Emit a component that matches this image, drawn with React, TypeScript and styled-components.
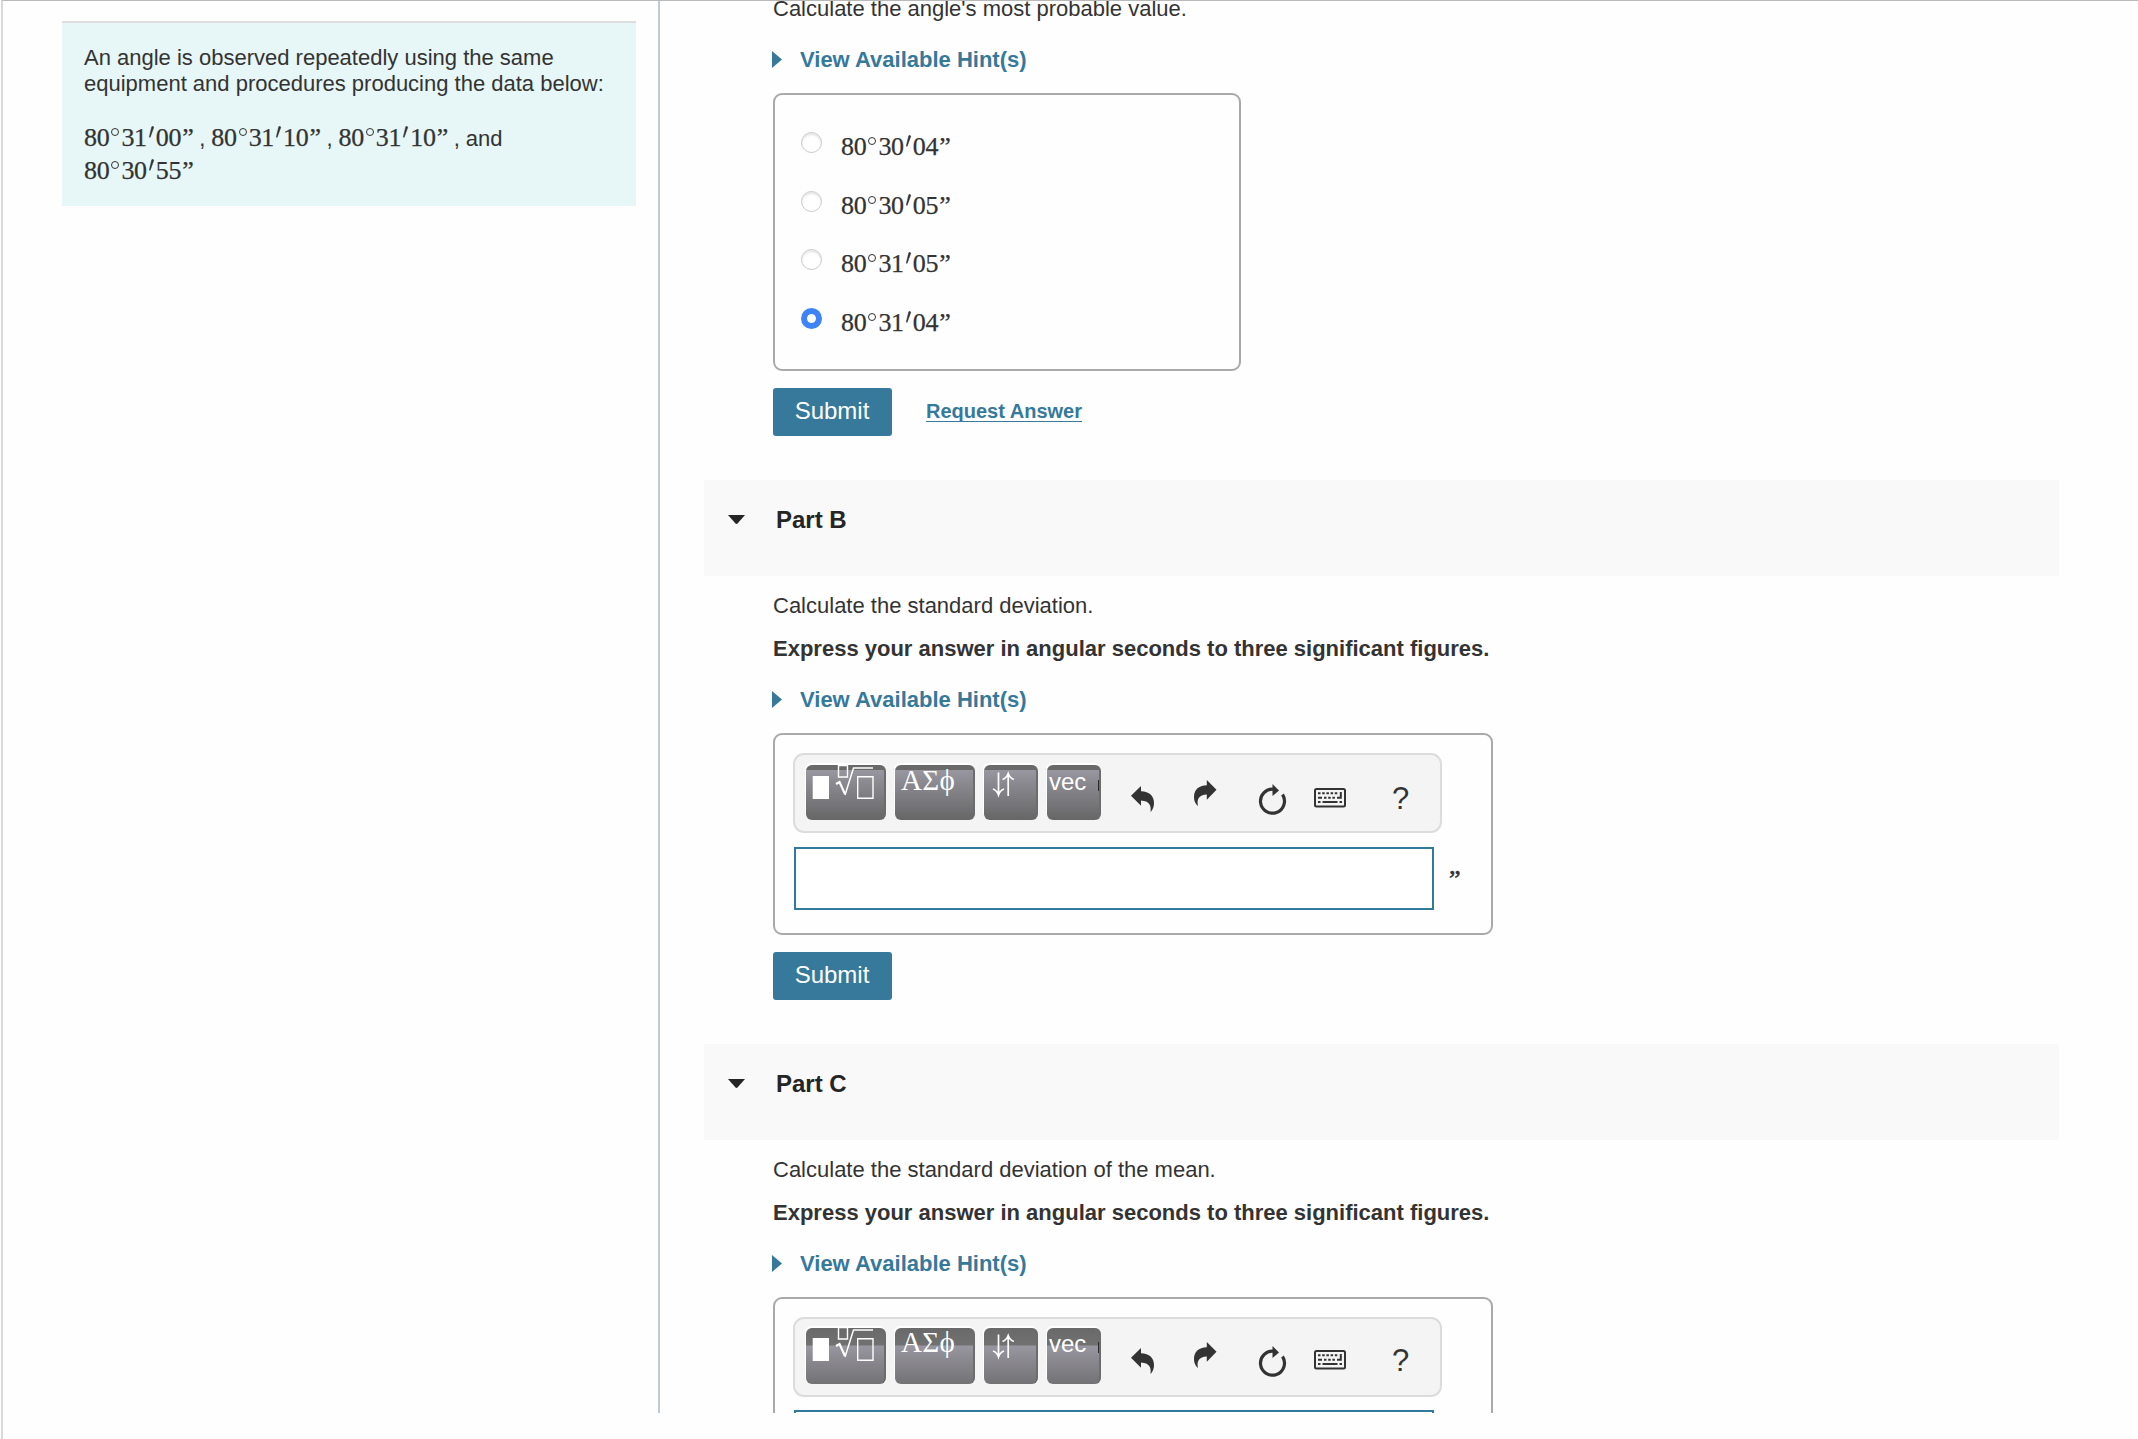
import { FC } from 'react';
import styled, { createGlobalStyle } from 'styled-components';

const GlobalStyle = createGlobalStyle`
  * {
    box-sizing: border-box;
  }
  body {
    margin: 0;
    background: #fefefe;
    color: #333;
    font-family: 'Liberation Sans', Arial, sans-serif;
    font-size: 22px;
    line-height: 26px;
  }
`;

const Frame = styled.div`
  height: 1439px;
  margin-left: 1px;
  border-top: 1px solid #b9b9b9;
  border-left: 2px solid #d9d9d9;
  overflow: hidden;
`;

const Columns = styled.div`
  display: flex;
  height: 1412px;
  overflow: hidden;
`;

const Sidebar = styled.aside`
  width: 657px;
  flex: none;
  padding: 20px 22px 0 59px;
  border-right: 2px solid #c0cad6;
`;

const ProblemBox = styled.div`
  height: 185px;
  padding: 22px 22px 0;
  border-top: 2px solid #dedede;
  background: #e7f6f6;
`;

const ProblemText = styled.p`
  margin: 0;
  white-space: nowrap;
`;

const ProblemData = styled.p`
  margin: 26px 0 0;
  line-height: 32.5px;
  white-space: nowrap;
`;

const Separator = styled.span`
  display: inline-block;
  width: 17px;
  padding-left: 5px;
`;

const Main = styled.main`
  flex: 1;
  margin: -5px 79px 0 44px;
`;

const PartBody = styled.section`
  padding: 0 0 44px 69px;
`;

const PartHeader = styled.header`
  display: flex;
  height: 96px;
  margin-bottom: 17px;
  padding: 26px 0 0 24px;
  background: #f9f9f9;
  color: #252525;
  font-size: 24px;
  font-weight: bold;
  line-height: 27px;
`;

const Collapse = styled.svg`
  width: 17px;
  height: 9px;
  margin: 9px 31px 0 0;
`;

const Question = styled.p`
  margin: 0;
`;

const Instruction = styled.p`
  margin: 17px 0 0;
  font-weight: bold;
`;

const Hint = styled.a`
  display: flex;
  align-items: center;
  margin: 25px 0 20px;
  color: #36799a;
  font-weight: bold;

  svg {
    width: 10px;
    height: 17px;
    margin: -2px 18px 0 -1px;
  }
`;

const Box = styled.div<{ $width: number, $height: number }>`
  width: ${({ $width }) => $width}px;
  height: ${({ $height }) => $height}px;
  border: 2px solid #a9a9a9;
  border-radius: 9px;
`;

const OptionList = styled(Box)`
  padding: 37px 26px 0;
`;

const Option = styled.label`
  display: flex;
  height: 58.7px;
`;

const Radio = styled.span<{ $checked: boolean }>`
  width: 21px;
  height: 21px;
  margin-right: 19px;
  border-radius: 50%;
  border: ${({ $checked }) => ($checked ? '6.5px solid #3f83f8' : '1px solid #c9c9c9')};
  background: #fff;
  box-shadow: ${({ $checked }) => ($checked ? 'none' : 'inset 0 2px 2px #e6e6e6')};
`;

const OptionValue = styled.span`
  padding-top: 2px;
`;

const Actions = styled.div`
  display: flex;
  margin-top: 17px;
`;

const Submit = styled.button`
  width: 119px;
  height: 48px;
  padding: 0 1px 3px 0;
  border: 0;
  border-radius: 3px;
  background: #36799a;
  color: #fff;
  font: 24px 'Liberation Sans', Arial, sans-serif;
`;

const RequestAnswer = styled.a`
  height: 22px;
  margin: 12px 0 0 34px;
  border-bottom: 1px solid #36799a;
  color: #36799a;
  font-size: 20px;
  font-weight: bold;
  line-height: 22px;
`;

const AngleText = styled.span`
  display: inline-flex;
  align-items: baseline;
  font-family: 'Liberation Serif', 'Times New Roman', serif;
  font-size: 26px;
  line-height: 26px;
  letter-spacing: -0.3px;
  -webkit-text-stroke: 0.25px #333;
`;

const Degree = styled.span`
  display: inline-block;
  width: 8px;
  height: 8px;
  margin: 0 2px 0 2px;
  transform: translateY(-10px);
  border: 1px solid #333;
  border-radius: 50%;
`;

const Prime = styled.svg`
  width: 9px;
  height: 13px;
  transform: translateY(-7px);
`;

const Quote = styled.span`
  width: 13px;
  padding-left: 1px;
`;

const AnswerBox = styled(Box)`
  padding: 18px;
`;

const Toolbar = styled.div`
  display: flex;
  align-items: flex-start;
  width: 649px;
  height: 80px;
  padding: 10px 0 0 11px;
  border: 2px solid #dcdcdc;
  border-radius: 11px;
  background: #f4f4f4;
`;

const ToolButton = styled.span<{ $width: number, $shifted: boolean }>`
  flex: none;
  width: ${({ $width }) => $width}px;
  height: ${({ $shifted }) => ($shifted ? 56 : 55)}px;
  margin: ${({ $shifted }) => ($shifted ? '-1px' : '0')} 9px 0 0;
  padding-top: ${({ $shifted }) => ($shifted ? 0 : 1)}px;
  overflow: hidden;
  border-radius: 6px;
  border-right: 2px solid #6c6c6c;
  background: ${({ $shifted }) => ($shifted
    ? 'linear-gradient(#696969, #717171 17px, #98969f 18px, #737275)'
    : 'linear-gradient(#696969 0, #696969 5px, #98969f 5px, #666)')};
  box-shadow: -1px -2px 0 #fff;
  color: #fff;

  svg {
    display: block;
    margin-top: -1px;
  }
`;

const Greek = styled.span`
  display: block;
  padding-left: 6px;
  font-family: 'Liberation Serif', serif;
  font-size: 29px;
  line-height: 28px;
  letter-spacing: 0.3px;
`;

const Vec = styled.span`
  display: block;
  padding-left: 2px;
  font-size: 24px;
  line-height: 32px;
`;

// sliver of the next sprite at the right edge of the vec button
const SpriteEdge = styled.span`
  float: right;
  width: 1px;
  height: 11px;
  margin-top: 14px;
  background: #2b2b2b;
`;

const ToolIcon = styled.svg<{ $top: number, $left: number }>`
  flex: none;
  margin: ${({ $top }) => $top}px 0 0 ${({ $left }) => $left}px;
  color: #333;
`;

const Help = styled.span<{ $top: number }>`
  margin: ${({ $top }) => $top}px 0 0 46px;
  font-size: 31px;
  line-height: 36px;
`;

const InputRow = styled.div<{ $shifted: boolean }>`
  display: flex;
  margin: ${({ $shifted }) => ($shifted ? 13 : 14)}px 0 0 1px;
`;

const AnswerInput = styled.input`
  width: 640px;
  height: 63px;
  border: 2px solid #317a9b;
  background: #fff;
  outline: 0;
`;

const Unit = styled.span`
  margin: 20px 0 0 15px;
  font-family: 'Liberation Serif', serif;
  font-size: 26px;
  -webkit-text-stroke: 0.6px #333;
`;

type TAngle = {
  deg: string,
  min: string,
  sec: string,
};

const Angle: FC<TAngle> = ({ deg, min, sec }) => (
  <AngleText>
    {deg}
    <Degree />
    {min}
    <Prime viewBox='0 0 9 13'>
      <path d='M5.9 0.3 6.8 1.2 3.1 11.4 2.300 11 4.700 0.900Q5.100 0 5.900 0.300Z' fill='#333' stroke='#333' strokeWidth='0.500' />
    </Prime>
    {sec}
    <Quote>”</Quote>
  </AngleText>
);

const HintLink: FC = () => (
  <Hint>
    <svg viewBox='0 0 10 17'><path d='M0 0 10 8.5 0 17Z' fill='currentColor' /></svg>
    View Available Hint(s)
  </Hint>
);

// the second toolbar sits a little higher than the first one
const MathToolbar: FC<{ shifted: boolean }> = ({ shifted }) => {
  const lift = shifted ? 2 : 0;
  return (
    <Toolbar>
      <ToolButton $width={80} $shifted={shifted}>
        <svg width='78' height='36' viewBox='0 0 78 36' fill='none' stroke='#fff'>
          <path d='M6.7 11H23v23H6.7Z' fill='#fff' stroke='none' />
          <path d='M32.5 0.5h9v11.5h-9ZM51.7 11.7H67v21.6H51.7Z' strokeWidth='1.4' />
          <path d='m30 19 3.5-2 5.5 12' strokeWidth='2.2' />
          <path d='m39 30 8.5-27H67' strokeWidth='1.5' />
        </svg>
      </ToolButton>
      <ToolButton $width={80} $shifted={shifted}>
        <Greek>ΑΣϕ</Greek>
      </ToolButton>
      <ToolButton $width={54} $shifted={shifted}>
        <svg width='52' height='36' viewBox='0 0 52 36' fill='none' stroke='#fff' strokeWidth='1.7'>
          <path d='M14.5 7.5V30M9 24q4 1.5 5.5 6 1.5-4.5 5.5-6' />
          <path d='M24.2 31V8.5M18.5 14.5q4-1.5 5.7-6 1.7 4.5 5.7 6' />
        </svg>
      </ToolButton>
      <ToolButton $width={54} $shifted={shifted}>
        <SpriteEdge />
        <Vec>vec</Vec>
      </ToolButton>
      <ToolIcon $top={21 - lift} $left={21} width='23' height='26' viewBox='0 0 23 26'>
        <path d='M0 9.8 10 0v5.3c8.4.2 13 4.7 13 11.7 0 3.8-1.2 6.8-3.5 9 1-6.3-1-10.9-9.5-11.4v5.2Z' fill='currentColor' />
      </ToolIcon>
      <ToolIcon $top={15 - lift} $left={40} width='23' height='26' viewBox='0 0 23 26'>
        <path d='M22.5 9.8 12.8 0v5.3C4.5 5.5 0 10 0 17c0 3.8 1.2 6.8 4 9-1.5-6.8 1-10.9 8.8-11.4v5.2Z' fill='currentColor' />
      </ToolIcon>
      <ToolIcon $top={19 - lift} $left={41} width='29' height='31' viewBox='0 0 29 31'>
        <path d='M16 5.2A12 12 0 1 0 24.5 10.5' fill='none' stroke='currentColor' strokeWidth='3.2' />
        <path d='M14.5 0 21 6.5 14.5 12Z' fill='currentColor' />
      </ToolIcon>
      <ToolIcon $top={23 - lift} $left={27} width='32' height='20' viewBox='0 0 32 20'>
        <rect x='1' y='1' width='30' height='17.5' rx='1.5' fill='none' stroke='currentColor' strokeWidth='2' />
        <path
          d='M4 5.3h2.5M8.2 5.3h2.5M12.4 5.3h2.5M16.6 5.3h2.5M20.8 5.3h2.5M4 9.7h4M10 9.7h2.5M14.2 9.7h2.5M18.4 9.7h2.5M23 9.7h4.8M26.8 4v6.5M4 14h2.5M8.5 14h15M25.5 14H28'
          stroke='currentColor'
          strokeWidth='2' />
      </ToolIcon>
      <Help $top={16 - lift}>?</Help>
    </Toolbar>
  );
};

type TPart = {
  title: string,
  question: string,
  shifted?: boolean,
};

const AnswerPart: FC<TPart> = ({ title, question, shifted = false }) => (
  <>
    <PartHeader>
      <Collapse viewBox='0 0 17 9'><path d='M0 0h17l-7.5 8.5q-1 .8-2 0Z' fill='currentColor' /></Collapse>
      {title}
    </PartHeader>
    <PartBody>
      <Question>{question}</Question>
      <Instruction>Express your answer in angular seconds to three significant figures.</Instruction>
      <HintLink />
      <AnswerBox $width={720} $height={202}>
        <MathToolbar shifted={shifted} />
        <InputRow $shifted={shifted}>
          <AnswerInput />
          {!shifted && <Unit>”</Unit>}
        </InputRow>
      </AnswerBox>
      {!shifted && (
        <Actions>
          <Submit>Submit</Submit>
        </Actions>
      )}
    </PartBody>
  </>
);

const options = [
  { deg: '80', min: '30', sec: '04' },
  { deg: '80', min: '30', sec: '05' },
  { deg: '80', min: '31', sec: '05' },
  { deg: '80', min: '31', sec: '04' },
];

const App: FC = () => (
  <Frame>
    <GlobalStyle />
    <Columns>
      <Sidebar>
        <ProblemBox>
          <ProblemText>
            An angle is observed repeatedly using the same
            <br />
            equipment and procedures producing the data below:
          </ProblemText>
          <ProblemData>
            <Angle deg='80' min='31' sec='00' />
            <Separator>,</Separator>
            <Angle deg='80' min='31' sec='10' />
            <Separator>,</Separator>
            <Angle deg='80' min='31' sec='10' />
            <Separator>,</Separator>
            and
            <br />
            <Angle deg='80' min='30' sec='55' />
          </ProblemData>
        </ProblemBox>
      </Sidebar>
      <Main>
        <PartBody>
          <Question>Calculate the angle&apos;s most probable value.</Question>
          <HintLink />
          <OptionList $width={468} $height={278}>
            {options.map((option, index) => (
              <Option key={option.min + option.sec}>
                <Radio $checked={index === 3} />
                <OptionValue><Angle {...option} /></OptionValue>
              </Option>
            ))}
          </OptionList>
          <Actions>
            <Submit>Submit</Submit>
            <RequestAnswer>Request Answer</RequestAnswer>
          </Actions>
        </PartBody>
        <AnswerPart title='Part B' question='Calculate the standard deviation.' />
        <AnswerPart title='Part C' question='Calculate the standard deviation of the mean.' shifted />
      </Main>
    </Columns>
  </Frame>
);

export default App;
